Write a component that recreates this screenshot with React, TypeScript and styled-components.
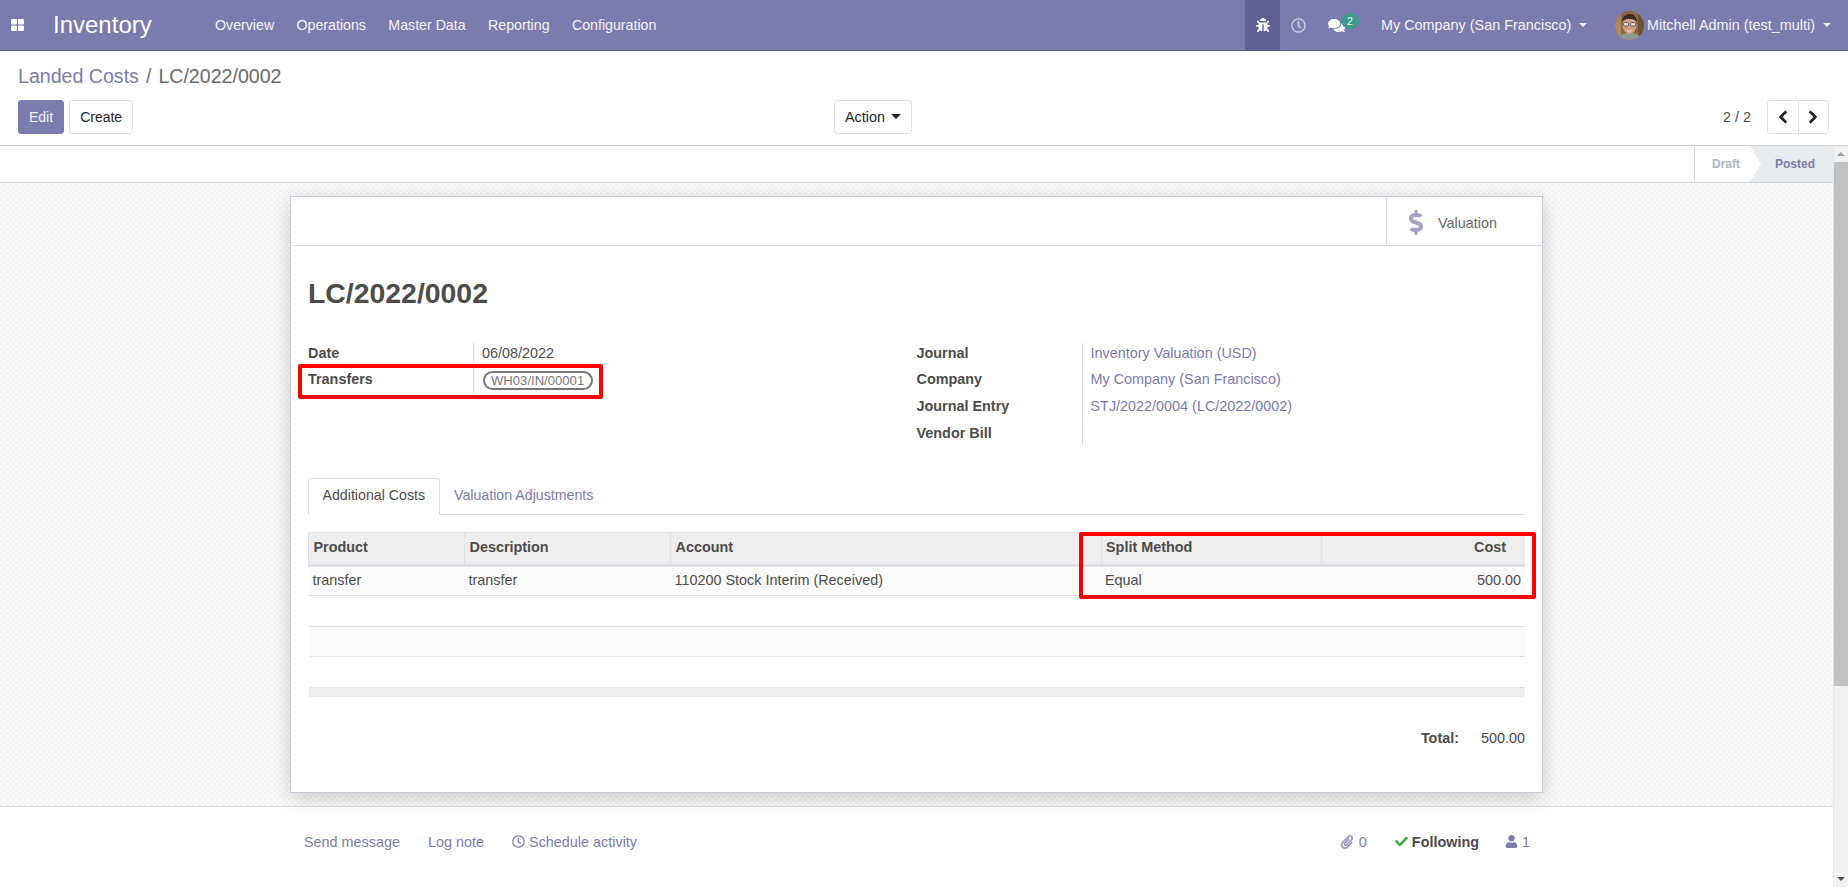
import React from "react";
import styled, { createGlobalStyle } from "styled-components";
import { FaBug, FaRegClock, FaComments, FaChevronLeft, FaChevronRight, FaDollarSign, FaPaperclip, FaCheck, FaUser } from "react-icons/fa";

const FONT = `"Liberation Sans", Arial, sans-serif`;
const ACCENT = "#7c7bad";
const TEXT = "#4c4c4c";

const Global = createGlobalStyle`
  html, body { margin: 0; padding: 0; height: 100%; overflow: hidden; background: #fff; }
  body { font-family: ${FONT}; font-size: 14.4px; color: ${TEXT}; }
  * { box-sizing: border-box; }
`;

const Page = styled.div`
  height: 887px;
  display: flex;
  flex-direction: column;
  overflow: hidden;
`;

const NavBar = styled.header`
  height: 51px;
  flex: none;
  background: ${ACCENT};
  border-bottom: 1px solid #5f5e97;
  display: flex;
  align-items: stretch;
  color: #fff;
`;
const AppsButton = styled.span`
  width: 53px;
  padding-left: 11px;
  display: flex;
  align-items: center;
`;
const Brand = styled.span`
  width: 152px;
  font-size: 24px;
  display: flex;
  align-items: center;
`;
const MenuList = styled.nav`
  flex: 1;
  display: flex;
  align-items: center;
  gap: 22.4px;
  padding-left: 10px;
`;
const MenuItem = styled.span`
  font-size: 14.2px;
  color: #f4f4f8;
`;
const Systray = styled.div`
  display: flex;
  align-items: stretch;
`;
const DebugCell = styled.span`
  width: 35px;
  background: #5f5e97;
  display: flex;
  align-items: center;
  justify-content: center;
  font-size: 14px;
`;
const ClockCell = styled.span`
  width: 36px;
  display: flex;
  align-items: center;
  justify-content: center;
  font-size: 15px;
  color: #c9c8de;
`;
const ChatCell = styled.span`
  position: relative;
  width: 65px;
  display: flex;
  align-items: center;
  padding-left: 12px;
  font-size: 17px;
`;
const Badge = styled.span`
  position: absolute;
  left: 25px;
  top: 13px;
  width: 18px;
  height: 16px;
  border-radius: 50%;
  background: #3d9c90;
  color: #f0f0f0;
  font-size: 10.5px;
  display: flex;
  align-items: center;
  justify-content: center;
`;
const Dropdown = styled.span<{ $w: number }>`
  width: ${(p) => p.$w}px;
  display: flex;
  align-items: center;
  color: #f4f4f8;
  white-space: nowrap;
`;
const Caret = styled.i<{ $gap?: number; $size?: number }>`
  display: inline-block;
  margin-left: ${(p) => p.$gap ?? 8}px;
  border-top: ${(p) => p.$size ?? 4.5}px solid currentColor;
  border-left: ${(p) => p.$size ?? 4.5}px solid transparent;
  border-right: ${(p) => p.$size ?? 4.5}px solid transparent;
`;
const AvatarSvg = styled.svg`
  width: 29px;
  height: 29px;
  margin-right: 3px;
  flex: none;
`;

const ControlPanel = styled.section`
  height: 95px;
  flex: none;
  border-bottom: 1px solid #cfcfcf;
  padding: 12px 19px 0 18px;
`;
const Crumbs = styled.div`
  height: 26px;
  font-size: 19.6px;
  line-height: 26px;
  color: #6b6b6b;
  display: flex;
  gap: 7px;
`;
const CrumbLink = styled.span`
  color: ${ACCENT};
`;
const ButtonRow = styled.div`
  display: grid;
  grid-template-columns: 816px auto 1fr;
  align-items: center;
  margin-top: 11px;
`;
const Left = styled.div`
  display: flex;
  gap: 5px;
`;
const Right = styled.div`
  display: flex;
  justify-content: flex-end;
  align-items: center;
  gap: 16px;
`;
const Btn = styled.span<{ $primary?: boolean }>`
  height: 34px;
  padding: 0 10px 1px;
  display: inline-flex;
  align-items: center;
  border-radius: 3px;
  font-size: 14px;
  background: ${(p) => (p.$primary ? ACCENT : "#fff")};
  color: ${(p) => (p.$primary ? "#f2f2f7" : "#212529")};
  border: 1px solid ${(p) => (p.$primary ? ACCENT : "#dee2e6")};
`;
const ActionBtn = styled(Btn)`
  font-size: 14.4px;
  padding: 0 10px 1px;
`;
const PagerGroup = styled.div`
  display: flex;
  width: 62px;
  height: 34px;
  border: 1px solid #dee2e6;
  border-radius: 3px;
  color: #212529;
`;
const PagerBtn = styled.span`
  flex: 1;
  display: flex;
  align-items: center;
  justify-content: center;
  font-size: 14px;
  svg { stroke: currentColor; stroke-width: 30; }
  & + & { border-left: 1px solid #dee2e6; }
`;

const Main = styled.div`
  flex: 1;
  min-height: 0;
  display: flex;
`;
const Content = styled.div`
  flex: 1;
  min-width: 0;
  display: flex;
  flex-direction: column;
`;
const ScrollRail = styled.div`
  width: 15px;
  flex: none;
  background: #f1f1f1;
  display: flex;
  flex-direction: column;
  align-items: center;
  border-left: 1px solid #e8e8e8;
`;
const ScrollArrow = styled.i<{ $down?: boolean }>`
  flex: none;
  margin: 6px 0;
  border-left: 4px solid transparent;
  border-right: 4px solid transparent;
  ${(p) => (p.$down ? "border-top: 4px solid #505050;" : "border-bottom: 4px solid #a3a3a3;")}
`;
const ScrollThumb = styled.div`
  width: 100%;
  height: 524px;
  background: #c1c1c1;
  flex: none;
`;
const ScrollSpacer = styled.div`
  flex: 1;
`;

const StatusBar = styled.div`
  height: 37px;
  flex: none;
  background: #fff;
  border-bottom: 1px solid #ced4da;
  display: flex;
  justify-content: flex-end;
`;
const StatusDraft = styled.span`
  width: 56px;
  border-left: 1px solid #ced4da;
  display: flex;
  align-items: center;
  padding-left: 17px;
  font-weight: 700;
  font-size: 12px;
  color: #adb5bd;
`;
const StatusPosted = styled.span`
  width: 83px;
  background: #e9ecef;
  clip-path: polygon(0 0, 100% 0, 100% 100%, 0 100%, 11px 50%);
  display: flex;
  align-items: center;
  padding-left: 25px;
  font-weight: 700;
  font-size: 12px;
  color: ${ACCENT};
`;

const SheetBg = styled.div`
  flex: 1;
  min-height: 0;
  position: relative;
  z-index: 1;
  padding-top: 13px;
  display: flex;
  justify-content: center;
  align-items: flex-start;
  background: repeating-conic-gradient(#f3f3f3 0 25%, #fbfbfb 0 50%) 0 0 / 6px 6px;
`;
const Sheet = styled.div`
  width: 1253px;
  height: 597px;
  background: #fff;
  border: 1px solid #c8c8d6;
  box-shadow: 0 5px 20px -1px rgba(0, 0, 0, 0.2);
`;
const ButtonBox = styled.div`
  height: 49px;
  border-bottom: 1px solid #dcdce6;
  display: flex;
  justify-content: flex-end;
`;
const StatButton = styled.div`
  width: 156px;
  border-left: 1px solid #dcdce6;
  display: flex;
  align-items: center;
  color: #666;
  padding: 3px 0 0 20px;
  gap: 13px;
  svg { color: #a1a0c6; font-size: 25px; width: 18px; }
`;
const SheetBody = styled.div`
  padding: 0 17px;
`;
const Title = styled.h1`
  margin: 0;
  padding-top: 28px;
  height: 97px;
  font-size: 28.4px;
  line-height: 38px;
  font-weight: 700;
  color: ${TEXT};
`;
const Columns = styled.div`
  display: flex;
  height: 135px;
`;
const FieldGroup = styled.div<{ $width: number }>`
  position: relative;
  width: ${(p) => p.$width}px;
  align-self: flex-start;
`;
const FieldRow = styled.div`
  display: grid;
  grid-template-columns: 165px 1fr;
  min-height: 26.4px;
  line-height: 21px;
`;
const VendorRow = styled(FieldRow)`
  min-height: 23px;
  padding-top: 0.6px;
`;
const FieldLabel = styled.div`
  font-weight: 700;
`;
const FieldValue = styled.div`
  border-left: 1px solid #dcdcdc;
  padding: 0 8px;
`;
const LinkValue = styled(FieldValue)`
  color: ${ACCENT};
`;
const Pill = styled.span`
  display: inline-block;
  height: 19px;
  line-height: 15px;
  margin: 2px 0 0 0.5px;
  padding: 0 6.5px;
  border: 2px solid #777;
  border-radius: 10px;
  font-size: 13.1px;
  color: #777;
`;
const RedBox = styled.div`
  position: absolute;
  border: 4px solid #ff0000;
  border-radius: 2px;
  pointer-events: none;
`;
const TransfersMark = styled(RedBox)`
  left: -10px;
  top: 21px;
  width: 305px;
  height: 35px;
`;
const Tabs = styled.div`
  display: flex;
  height: 37px;
  border-bottom: 1px solid #dcdce6;
  margin-bottom: 17px;
`;
const Tab = styled.span<{ $active?: boolean }>`
  height: 37px;
  padding: 0 13.5px 3px;
  display: flex;
  align-items: center;
  font-size: 14.2px;
  color: ${(p) => (p.$active ? TEXT : ACCENT)};
  border: 1px solid ${(p) => (p.$active ? "#dcdce6" : "transparent")};
  border-bottom-color: ${(p) => (p.$active ? "#fff" : "transparent")};
  border-radius: 3px 3px 0 0;
`;
const TableWrap = styled.div`
  position: relative;
`;
const TableMark = styled(RedBox)`
  left: 771px;
  top: 0;
  width: 457px;
  height: 67px;
`;
const Grid = styled.table`
  width: 100%;
  table-layout: fixed;
  border-collapse: collapse;
`;
const Th = styled.th<{ $w?: number; $right?: boolean }>`
  width: ${(p) => (p.$w ? `${p.$w}px` : "auto")};
  height: 33px;
  padding: 0 ${(p) => (p.$right ? "19px" : "4.5px")} 3px 4.5px;
  background: #eee;
  text-align: ${(p) => (p.$right ? "right" : "left")};
  font-weight: 700;
  border-top: 1px solid #dee2e6;
  border-bottom: 3px solid #dee2e6;
  border-left: 1px solid #dee2e6;
`;
const Tr = styled.tr<{ $shade?: boolean; $h: number }>`
  height: ${(p) => p.$h}px;
  background: ${(p) => (p.$shade ? "#fbfbfb" : "#fff")};
  border-bottom: 1px solid #dee2e6;
`;
const Td = styled.td<{ $right?: boolean }>`
  padding: 0 4px 3px;
  text-align: ${(p) => (p.$right ? "right" : "left")};
`;
const FootRow = styled.tr`
  height: 9px;
  background: #eee;
`;
const Totals = styled.div`
  display: flex;
  justify-content: flex-end;
  gap: 22px;
  padding-top: 31px;
  line-height: 20px;
`;
const TotalLabel = styled.span`
  font-weight: 700;
`;

const Chatter = styled.div`
  height: 81px;
  flex: none;
  background: #fff;
  border-top: 1px solid #dcdcdc;
  padding: 0 303px 11px 304px;
  display: flex;
  align-items: center;
  justify-content: space-between;
  color: ${ACCENT};
`;
const ChatterGroup = styled.div`
  display: flex;
  align-items: center;
  gap: 28px;
`;
const ChatterItem = styled.span`
  display: inline-flex;
  align-items: center;
  gap: 4px;
  svg { font-size: 13px; }
`;
const ClipItem = styled(ChatterItem)`
  gap: 5px;
  svg { opacity: 0.75; font-size: 14px; }
`;
const FollowItem = styled(ChatterItem)`
  font-weight: 700;
  color: ${TEXT};
  margin-right: -2px;
  svg { color: #4aa84a; }
`;

const Avatar = () => (
  <AvatarSvg viewBox="0 0 29 29">
    <defs>
      <clipPath id="avatarClip">
        <circle cx="14.5" cy="14.5" r="14.5" />
      </clipPath>
    </defs>
    <g clipPath="url(#avatarClip)">
      <rect width="29" height="29" fill="#8a6a46" />
      <rect x="0" y="0" width="6" height="29" fill="#a98a5e" />
      <rect x="23" y="0" width="6" height="29" fill="#6d5238" />
      <path d="M3 29c1-5 5-7 11.500-7S25 24 26 29z" fill="#8c9a94" />
      <ellipse cx="14.500" cy="14" rx="7" ry="9" fill="#cf9f86" />
      <path d="M7 12c0-6 3-9 7.500-9S22 6 22 12c-1-3-3-4-7.500-4S8 9 7 12z" fill="#3d2a1f" />
      <rect x="8.500" y="11.500" width="5" height="3.500" rx="1" fill="#e8d5c8" stroke="#3a3a3a" strokeWidth=".7" />
      <rect x="15.500" y="11.500" width="5" height="3.500" rx="1" fill="#e8d5c8" stroke="#3a3a3a" strokeWidth=".7" />
      <path d="M11.500 19c2 1 4 1 6 0-1 2-5 2-6 0z" fill="#f5ece6" />
    </g>
  </AvatarSvg>
);

const GridIcon = () => (
  <svg width="13" height="12" viewBox="0 0 13 12" fill="#fff">
    <rect x="0" y="0" width="6" height="5.500" rx="1" />
    <rect x="7" y="0" width="6" height="5.500" rx="1" />
    <rect x="0" y="6.500" width="6" height="5.500" rx="1" />
    <rect x="7" y="6.500" width="6" height="5.500" rx="1" />
  </svg>
);

export default function App() {
  return (
    <Page>
      <Global />
      <NavBar>
        <AppsButton><GridIcon /></AppsButton>
        <Brand>Inventory</Brand>
        <MenuList>
          {["Overview", "Operations", "Master Data", "Reporting", "Configuration"].map((m) => (
            <MenuItem key={m}>{m}</MenuItem>
          ))}
        </MenuList>
        <Systray>
          <DebugCell><FaBug /></DebugCell>
          <ClockCell><FaRegClock /></ClockCell>
          <ChatCell>
            <FaComments />
            <Badge>2</Badge>
          </ChatCell>
          <Dropdown $w={234}>My Company (San Francisco)<Caret /></Dropdown>
          <Dropdown $w={233}><Avatar />Mitchell Admin (test_multi)<Caret /></Dropdown>
        </Systray>
      </NavBar>

      <ControlPanel>
        <Crumbs>
          <CrumbLink>Landed Costs</CrumbLink>
          <span>/</span>
          <span>LC/2022/0002</span>
        </Crumbs>
        <ButtonRow>
          <Left>
            <Btn $primary>Edit</Btn>
            <Btn>Create</Btn>
          </Left>
          <ActionBtn>Action<Caret $gap={6} $size={5} /></ActionBtn>
          <Right>
            <span>2 / 2</span>
            <PagerGroup>
              <PagerBtn><FaChevronLeft /></PagerBtn>
              <PagerBtn><FaChevronRight /></PagerBtn>
            </PagerGroup>
          </Right>
        </ButtonRow>
      </ControlPanel>

      <Main>
        <Content>
          <StatusBar>
            <StatusDraft>Draft</StatusDraft>
            <StatusPosted>Posted</StatusPosted>
          </StatusBar>
          <SheetBg>
            <Sheet>
              <ButtonBox>
                <StatButton><FaDollarSign /> Valuation</StatButton>
              </ButtonBox>
              <SheetBody>
                <Title>LC/2022/0002</Title>
                <Columns>
                  <FieldGroup $width={608.5}>
                    <FieldRow>
                      <FieldLabel>Date</FieldLabel>
                      <FieldValue>06/08/2022</FieldValue>
                    </FieldRow>
                    <FieldRow>
                      <FieldLabel>Transfers</FieldLabel>
                      <FieldValue><Pill>WH03/IN/00001</Pill></FieldValue>
                    </FieldRow>
                    <TransfersMark />
                  </FieldGroup>
                  <FieldGroup $width={608}>
                    <FieldRow>
                      <FieldLabel>Journal</FieldLabel>
                      <LinkValue>Inventory Valuation (USD)</LinkValue>
                    </FieldRow>
                    <FieldRow>
                      <FieldLabel>Company</FieldLabel>
                      <LinkValue>My Company (San Francisco)</LinkValue>
                    </FieldRow>
                    <FieldRow>
                      <FieldLabel>Journal Entry</FieldLabel>
                      <LinkValue>STJ/2022/0004 (LC/2022/0002)</LinkValue>
                    </FieldRow>
                    <VendorRow>
                      <FieldLabel>Vendor Bill</FieldLabel>
                      <LinkValue />
                    </VendorRow>
                  </FieldGroup>
                </Columns>
                <Tabs>
                  <Tab $active>Additional Costs</Tab>
                  <Tab>Valuation Adjustments</Tab>
                </Tabs>
                <TableWrap>
                  <Grid>
                    <thead>
                      <tr>
                        <Th $w={156}>Product</Th>
                        <Th $w={206}>Description</Th>
                        <Th>Account</Th>
                        <Th $w={220}>Split Method</Th>
                        <Th $w={204} $right>Cost</Th>
                      </tr>
                    </thead>
                    <tbody>
                      <Tr $shade $h={30}>
                        <Td>transfer</Td>
                        <Td>transfer</Td>
                        <Td>110200 Stock Interim (Received)</Td>
                        <Td>Equal</Td>
                        <Td $right>500.00</Td>
                      </Tr>
                      <Tr $h={31}><Td colSpan={5} /></Tr>
                      <Tr $shade $h={30}><Td colSpan={5} /></Tr>
                      <Tr $h={31}><Td colSpan={5} /></Tr>
                      <FootRow><td colSpan={5} /></FootRow>
                    </tbody>
                  </Grid>
                  <TableMark />
                </TableWrap>
                <Totals>
                  <TotalLabel>Total:</TotalLabel>
                  <span>500.00</span>
                </Totals>
              </SheetBody>
            </Sheet>
          </SheetBg>
          <Chatter>
            <ChatterGroup>
              <ChatterItem>Send message</ChatterItem>
              <ChatterItem>Log note</ChatterItem>
              <ChatterItem><FaRegClock /> Schedule activity</ChatterItem>
            </ChatterGroup>
            <ChatterGroup>
              <ClipItem><FaPaperclip /> 0</ClipItem>
              <FollowItem><FaCheck /> Following</FollowItem>
              <ChatterItem><FaUser /> 1</ChatterItem>
            </ChatterGroup>
          </Chatter>
        </Content>
        <ScrollRail>
          <ScrollArrow />
          <ScrollThumb />
          <ScrollSpacer />
          <ScrollArrow $down />
        </ScrollRail>
      </Main>
    </Page>
  );
}
